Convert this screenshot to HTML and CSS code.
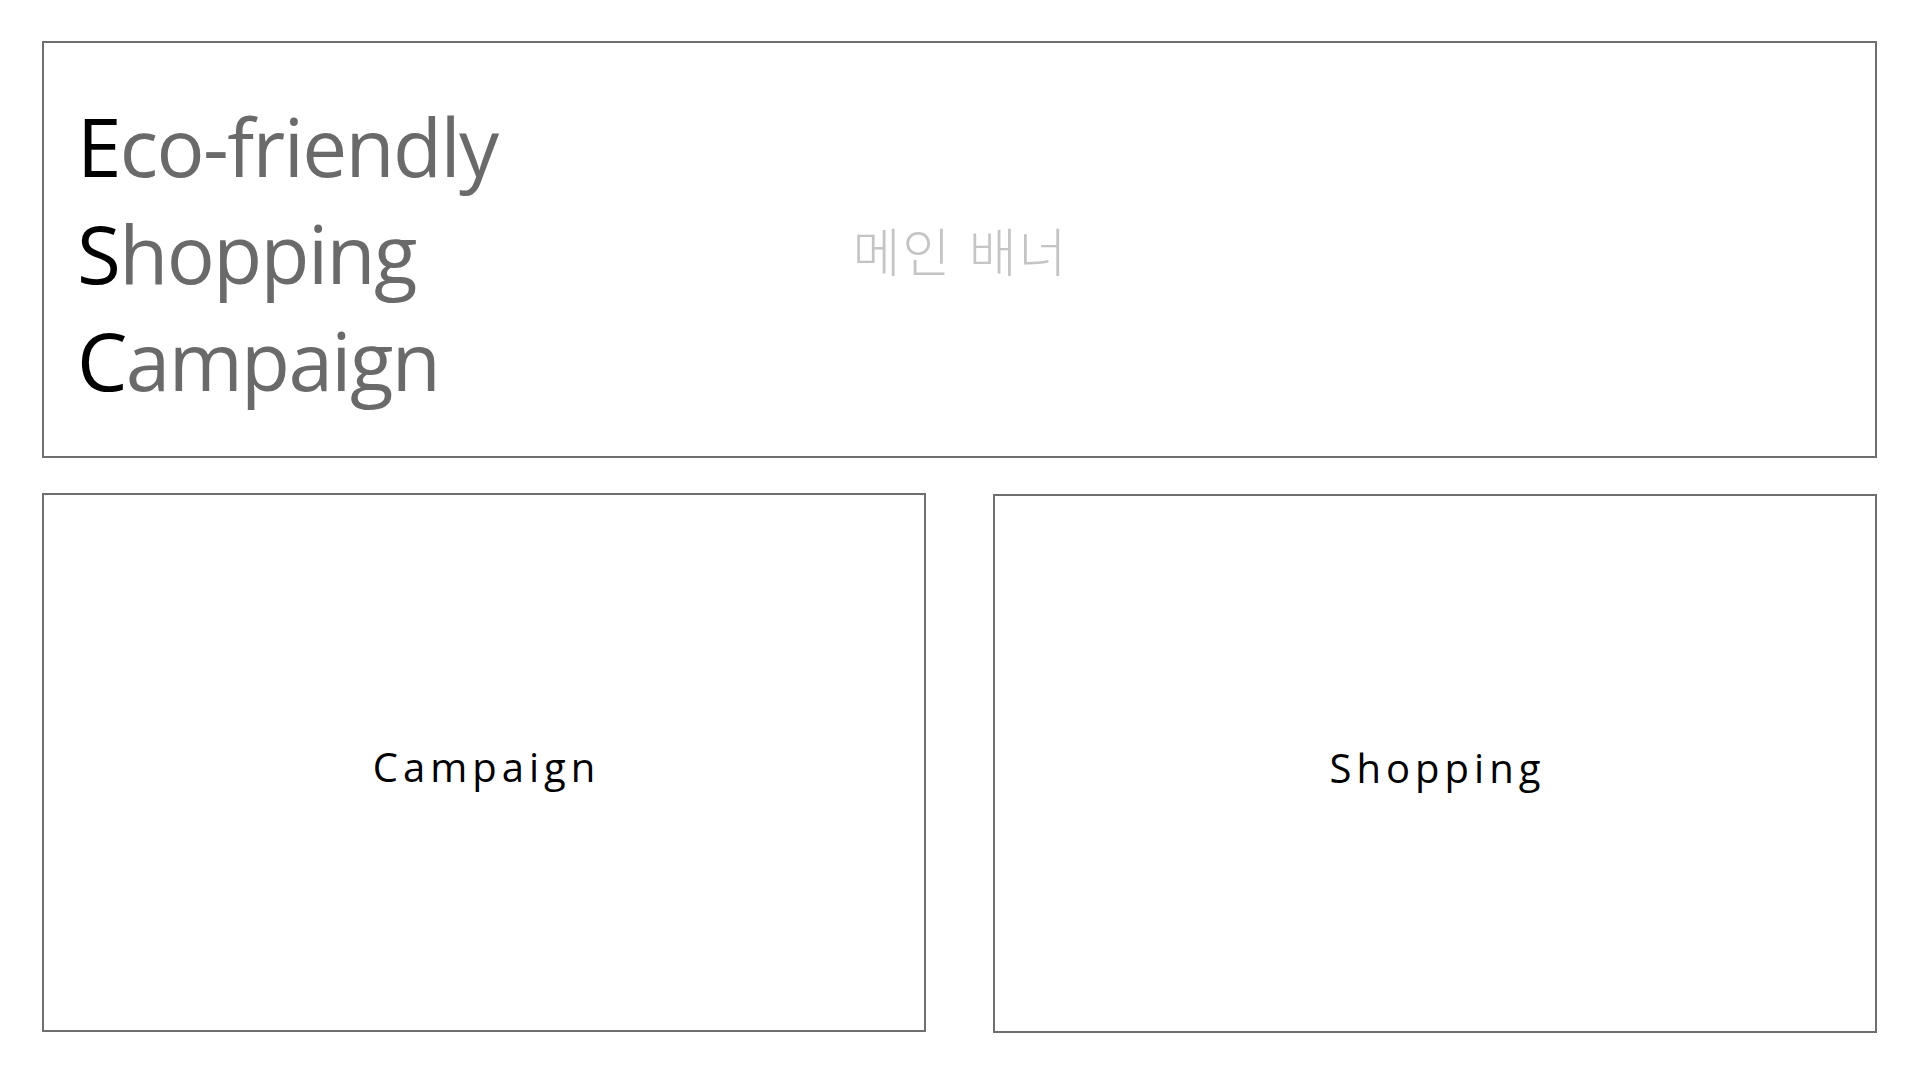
FILE: index.html
```html
<!DOCTYPE html>
<html lang="ko">
<head>
<meta charset="utf-8">
<title>Eco-friendly Shopping Campaign</title>
<link rel="stylesheet" href="styles.css">
</head>
<body>
<div class="page">
  <section class="banner">
    <h1 class="title">
      <span class="line"><span class="initial">E</span>co-friendly</span>
      <span class="line"><span class="initial">S</span>hopping</span>
      <span class="line"><span class="initial">C</span>ampaign</span>
    </h1>
    <div class="banner-label">메인 배너</div>
  </section>
  <div class="cards">
    <section class="card card-left"><span class="card-label">Campaign</span></section>
    <section class="card card-right"><span class="card-label">Shopping</span></section>
  </div>
</div>
</body>
</html>
```

FILE: styles.css
```css
html, body {
  margin: 0;
  padding: 0;
  background: #ffffff;
}

body {
  font-family: "Open Sans", "Noto Sans", sans-serif;
}

.page {
  width: 1920px;
  height: 1080px;
  box-sizing: border-box;
  padding: 41px 43px 0 42px;
  display: flex;
  flex-direction: column;
  gap: 35px;
}

.banner {
  height: 417px;
  box-sizing: border-box;
  border: 2px solid #6f6f6f;
  display: grid;
  align-items: center;
}

.title {
  grid-area: 1 / 1;
  justify-self: start;
  margin: 0;
  padding-left: 33px;
  padding-top: 5px;
  font-family: "Open Sans", "Noto Sans", sans-serif;
  font-weight: 400;
  font-size: 80px;
  line-height: 107px;
  letter-spacing: -1.6px;
  color: #6a6a6a;
  display: flex;
  flex-direction: column;
}

.line {
  display: block;
}

.initial {
  color: #000000;
}

.banner-label {
  grid-area: 1 / 1;
  justify-self: center;
  font-family: "Noto Sans CJK KR", "Noto Sans", sans-serif;
  font-size: 52px;
  font-weight: 300;
  line-height: 1;
  color: #c4c4c4;
  letter-spacing: 2px;
  padding-left: 2px;
}

.cards {
  display: flex;
  gap: 67px;
}

.card {
  flex: 1;
  height: 539px;
  box-sizing: border-box;
  border: 2px solid #6f6f6f;
  display: flex;
  align-items: center;
  justify-content: center;
}

.card-right {
  margin-top: 1px;
}

.card-label {
  font-family: "Open Sans", "Noto Sans", sans-serif;
  font-size: 40px;
  letter-spacing: 5px;
  padding-left: 5px;
  color: #000000;
  padding-top: 8px;
}
```
